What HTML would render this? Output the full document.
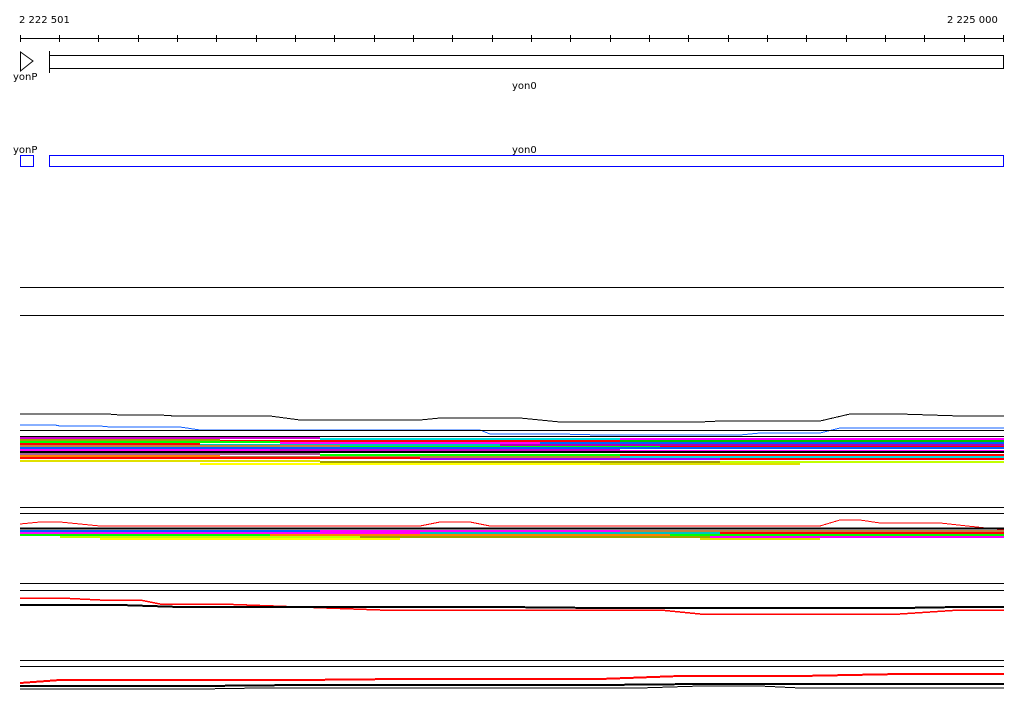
<!DOCTYPE html>
<html><head><meta charset="utf-8"><style>
html,body{margin:0;padding:0;background:#fff;width:1024px;height:714px;overflow:hidden}
svg{display:block}
text{font-family:"DejaVu Sans","Liberation Sans",sans-serif;font-size:10px;fill:#000}
</style></head><body>
<svg width="1024" height="714" viewBox="0 0 1024 714" shape-rendering="crispEdges">
<text x="19" y="23">2 222 501</text>
<text x="947" y="23">2 225 000</text>
<line x1="20" y1="38.5" x2="1004" y2="38.5" stroke="#000"/>
<g stroke="#000">
<line x1="20.5" y1="35" x2="20.5" y2="42"/><line x1="59.5" y1="35" x2="59.5" y2="42"/><line x1="98.5" y1="35" x2="98.5" y2="42"/><line x1="138.5" y1="35" x2="138.5" y2="42"/><line x1="177.5" y1="35" x2="177.5" y2="42"/><line x1="216.5" y1="35" x2="216.5" y2="42"/><line x1="256.5" y1="35" x2="256.5" y2="42"/><line x1="295.5" y1="35" x2="295.5" y2="42"/><line x1="334.5" y1="35" x2="334.5" y2="42"/><line x1="374.5" y1="35" x2="374.5" y2="42"/><line x1="413.5" y1="35" x2="413.5" y2="42"/><line x1="452.5" y1="35" x2="452.5" y2="42"/><line x1="492.5" y1="35" x2="492.5" y2="42"/><line x1="531.5" y1="35" x2="531.5" y2="42"/><line x1="570.5" y1="35" x2="570.5" y2="42"/><line x1="610.5" y1="35" x2="610.5" y2="42"/><line x1="649.5" y1="35" x2="649.5" y2="42"/><line x1="688.5" y1="35" x2="688.5" y2="42"/><line x1="728.5" y1="35" x2="728.5" y2="42"/><line x1="767.5" y1="35" x2="767.5" y2="42"/><line x1="806.5" y1="35" x2="806.5" y2="42"/><line x1="846.5" y1="35" x2="846.5" y2="42"/><line x1="885.5" y1="35" x2="885.5" y2="42"/><line x1="924.5" y1="35" x2="924.5" y2="42"/><line x1="964.5" y1="35" x2="964.5" y2="42"/><line x1="1003.5" y1="35" x2="1003.5" y2="42"/>
</g>
<path d="M20.5 52 L33 61 L20.5 71 Z" fill="none" stroke="#000" shape-rendering="auto"/>
<text x="13" y="80">yonP</text>
<line x1="49.5" y1="51" x2="49.5" y2="73" stroke="#000"/>
<rect x="49.5" y="55.5" width="954" height="13" fill="none" stroke="#000"/>
<text x="512" y="89">yon0</text>
<text x="13" y="153">yonP</text>
<text x="512" y="153">yon0</text>
<rect x="20.5" y="155.5" width="13" height="11" fill="none" stroke="#00f"/>
<rect x="49.5" y="155.5" width="954" height="11" fill="none" stroke="#00f"/>
<line x1="20" y1="287.5" x2="1004" y2="287.5" stroke="#000"/>
<line x1="20" y1="315.5" x2="1004" y2="315.5" stroke="#000"/>
<!-- band 1 -->
<path d="M20 414 H108 L120 415 H160 L175 416 H270 L300 420 H420 L440 418 H520 L560 422 H700 L720 421 H820 L850 414 H900 L960 416 H1004" fill="none" stroke="#000"/>
<path d="M20 425 H55 L60 426 H100 L110 427 H180 L200 430 H480 L490 434 H560 L600 435 H740 L760 433 H820 L840 428 H900 L920 428 H1004" fill="none" stroke="#1060ff"/>
<line x1="20" y1="430.5" x2="1004" y2="430.5" stroke="#000"/>
<line x1="20" y1="436.5" x2="1004" y2="436.5" stroke="#000"/>
<g>
<rect x="20" y="437" width="300" height="2" fill="#d000d0"/><rect x="320" y="438" width="300" height="2" fill="#00e0e0"/><rect x="620" y="438" width="384" height="2" fill="#ff00ff"/>
<rect x="20" y="439" width="200" height="2" fill="#a0a000"/><rect x="220" y="440" width="400" height="2" fill="#ff0000"/><rect x="620" y="440" width="384" height="2" fill="#00c000"/>
<rect x="20" y="441" width="260" height="2" fill="#00ff00"/><rect x="280" y="442" width="260" height="2" fill="#ff00ff"/><rect x="540" y="442" width="464" height="2" fill="#0060ff"/>
<rect x="20" y="443" width="180" height="2" fill="#ff0000"/><rect x="200" y="444" width="300" height="2" fill="#00c0c0"/><rect x="500" y="444" width="504" height="2" fill="#b000b0"/>
<rect x="20" y="445" width="320" height="2" fill="#c08040"/><rect x="340" y="446" width="320" height="2" fill="#00ff00"/><rect x="660" y="446" width="344" height="2" fill="#ff0000"/>
<rect x="20" y="447" width="984" height="2" fill="#0060ff"/>
<rect x="20" y="449" width="250" height="2" fill="#ff00ff"/><rect x="270" y="449" width="350" height="2" fill="#d000d0"/><rect x="620" y="450" width="384" height="2" fill="#ff00ff"/>
<rect x="20" y="451" width="984" height="2" fill="#000"/>
<rect x="20" y="453" width="300" height="2" fill="#a060a0"/><rect x="320" y="454" width="300" height="2" fill="#00ff00"/><rect x="620" y="454" width="384" height="2" fill="#ff0000"/>
<rect x="20" y="455" width="200" height="2" fill="#ff8000"/><rect x="220" y="456" width="400" height="2" fill="#c08040"/><rect x="620" y="456" width="384" height="2" fill="#00e0e0"/>
<rect x="20" y="457" width="400" height="2" fill="#ff0000"/><rect x="420" y="458" width="300" height="2" fill="#a000ff"/><rect x="720" y="458" width="284" height="2" fill="#ff0000"/>
<rect x="20" y="460" width="300" height="2" fill="#e0e000"/><rect x="320" y="461" width="400" height="2" fill="#a0a000"/><rect x="720" y="461" width="284" height="2" fill="#c0ff00"/>
<rect x="200" y="463" width="400" height="2" fill="#ffff00"/><rect x="600" y="463" width="200" height="2" fill="#e0e000"/>
</g>
<line x1="20" y1="507.5" x2="1004" y2="507.5" stroke="#000"/>
<line x1="20" y1="513.5" x2="1004" y2="513.5" stroke="#000"/>
<!-- band 2 -->
<path d="M20 524 L40 522 H60 L100 526 H420 L440 522 H470 L490 526 H820 L840 520 H860 L880 523 H940 L1004 530" fill="none" stroke="#ff0000"/>
<line x1="20" y1="528.5" x2="1004" y2="528.5" stroke="#000" stroke-width="2"/>
<g>
<rect x="20" y="530" width="300" height="2" fill="#0060ff"/><rect x="320" y="530" width="300" height="2" fill="#ff00ff"/><rect x="620" y="530" width="384" height="2" fill="#c08040"/>
<rect x="20" y="532" width="400" height="2" fill="#ff00ff"/><rect x="420" y="532" width="300" height="2" fill="#00c0c0"/><rect x="720" y="532" width="284" height="2" fill="#ff0000"/>
<rect x="20" y="534" width="250" height="2" fill="#00ff00"/><rect x="270" y="534" width="400" height="2" fill="#ff8000"/><rect x="670" y="534" width="334" height="2" fill="#00ff00"/>
<rect x="60" y="536" width="300" height="2" fill="#c0ff00"/><rect x="360" y="536" width="350" height="2" fill="#a0a000"/><rect x="710" y="536" width="294" height="2" fill="#ff00ff"/>
<rect x="100" y="538" width="300" height="2" fill="#ffff00"/><rect x="700" y="538" width="120" height="2" fill="#e0e000"/>
</g>
<line x1="20" y1="583.5" x2="1004" y2="583.5" stroke="#000"/>
<line x1="20" y1="590.5" x2="1004" y2="590.5" stroke="#000"/>
<!-- band 3 -->
<path d="M20 598 H60 L100 600 H140 L160 604 H220 L380 610 H660 L700 614 H900 L960 610 H1004" fill="none" stroke="#ff0000" stroke-width="1.5"/>
<path d="M20 605 H120 L180 607 H500 L600 608 H900 L960 607 H1004" fill="none" stroke="#000" stroke-width="2"/>
<line x1="20" y1="660.5" x2="1004" y2="660.5" stroke="#000"/>
<line x1="20" y1="666.5" x2="1004" y2="666.5" stroke="#000"/>
<!-- band 4 -->
<path d="M20 683 L60 680 H300 L400 679 H600 L680 676 H800 L900 674 H1004" fill="none" stroke="#ff0000" stroke-width="2"/>
<path d="M20 686 H200 L300 685 H600 L700 684 H1004" fill="none" stroke="#000" stroke-width="2"/>
<path d="M20 689 H200 L260 688 H640 L700 686 H760 L800 688 H1004" fill="none" stroke="#000"/>
</svg>
</body></html>
